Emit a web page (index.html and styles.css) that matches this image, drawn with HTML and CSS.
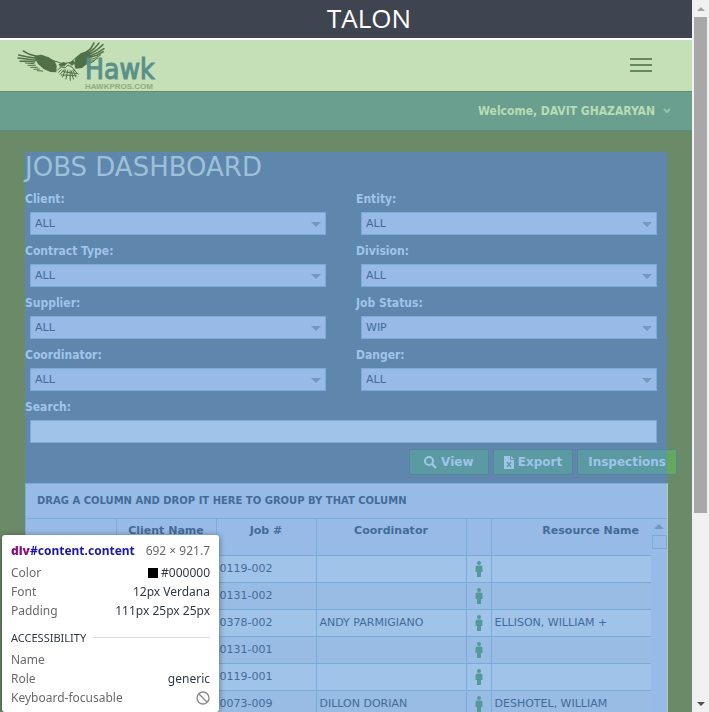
FILE: index.html
```html
<!DOCTYPE html>
<html lang="en">
<head>
<meta charset="utf-8">
<title>Jobs Dashboard</title>
<link rel="stylesheet" href="styles.css">
</head>
<body>
<div class="app">
  <header>
    <div class="brandbar">TALON</div>
    <div class="navbar">
      <a class="logo" href="#">
        <svg class="hawk" viewBox="51 120 267 123" aria-hidden="true">
          <g fill="#4f7049">
            <path d="M104 164l20-3 22 8 18 11 6 14-1 20-18-1-20-9-17-15-10-18z"/>
            <path d="M226 170l16-13 20-8 10 6-6 18-8 18-12 10-20 2-3-14z"/>
            <path d="M176 190l14-7 12 4-8 8-14 2zM206 186l14-8 6 8-10 8z"/>
          </g>
          <g fill="none" stroke="#4f7049" stroke-linecap="round">
            <path stroke-width="4.500" d="M70 150l18 10 22 6M56 162l24 5 28 5M54 171l26 3 26 4M60 181l22 0 22 2M258 154l14-11 10-17M262 158l20-15 15-17M264 162l28-16 17-15M266 166l28-12 18-11M262 172l30-10 18-10"/>
            <path stroke-width="3" d="M76 186l26 2M84 193l22 0M92 199l20 0M102 205l16-1M112 209l16 1M260 178l24-6 18-10M258 184l22-5 14-8M254 190l18-4 12-7"/>
            <path stroke-width="3" d="M160 179l20 6 12 10M226 172l-14 12-12 2M172 208l10-10 14 2 8-8 12 6 8 10M176 214l8-8M180 220l12-14M188 228l8-22M198 234l5-26M211 238l-1-28M220 234l-6-24M228 228l-9-20M235 220l-14-14M190 212l40 6M184 222l44 2"/>
          </g>
        </svg>
        <span class="logo-text"><span class="logo-name">Hawk</span><span class="logo-site">HAWKPROS.COM</span></span>
      </a>
      <button class="menu" type="button" aria-label="Menu"><span></span><span></span><span></span></button>
    </div>
    <div class="userbar">
      <a class="user" href="#">Welcome, DAVIT GHAZARYAN
        <svg width="8" height="6" viewBox="0 0 8 6" aria-hidden="true"><path d="M1 1l3 3 3-3" fill="none" stroke="#93c4a6" stroke-width="2"/></svg>
      </a>
    </div>
  </header>
  <main>
    <h1>JOBS DASHBOARD</h1>
    <form class="filters">
      <div class="field"><label for="client">Client:</label><div class="pick"><select id="client"><option>ALL</option></select></div></div>
      <div class="field"><label for="entity">Entity:</label><div class="pick"><select id="entity"><option>ALL</option></select></div></div>
      <div class="field"><label for="contract">Contract Type:</label><div class="pick"><select id="contract"><option>ALL</option></select></div></div>
      <div class="field"><label for="division">Division:</label><div class="pick"><select id="division"><option>ALL</option></select></div></div>
      <div class="field"><label for="supplier">Supplier:</label><div class="pick"><select id="supplier"><option>ALL</option></select></div></div>
      <div class="field"><label for="status">Job Status:</label><div class="pick"><select id="status"><option>WIP</option></select></div></div>
      <div class="field"><label for="coordinator">Coordinator:</label><div class="pick"><select id="coordinator"><option>ALL</option></select></div></div>
      <div class="field"><label for="danger">Danger:</label><div class="pick"><select id="danger"><option>ALL</option></select></div></div>
      <div class="field wide"><label for="search">Search:</label><input id="search" type="text"></div>
    </form>
    <div class="actions">
      <button type="button"><svg width="13" height="13" viewBox="0 0 13 13" aria-hidden="true"><circle cx="5" cy="5" r="4" fill="none" stroke="currentColor" stroke-width="2"/><path d="M8 8l4 4" stroke="currentColor" stroke-width="2.4"/></svg>View</button>
      <button type="button"><svg width="10" height="13" viewBox="0 0 10 13" aria-hidden="true"><path d="M0 0h6v4h4v9H0zM7 0l3 3H7z" fill="currentColor"/><path d="M3 6l4 5M7 6l-4 5" stroke="#5b9aa2" stroke-width="1.3"/></svg>Export</button>
      <button class="edge" type="button">Inspections</button>
    </div>
    <section class="grid">
      <div class="group">DRAG A COLUMN AND DROP IT HERE TO GROUP BY THAT COLUMN</div>
      <div class="grid-body">
        <table>
          <colgroup><col class="c-open"><col class="c-client"><col class="c-job"><col class="c-coord"><col class="c-icon"><col></colgroup>
          <thead><tr><th></th><th>Client Name</th><th>Job #</th><th>Coordinator</th><th></th><th class="resource">Resource Name</th></tr></thead>
          <tbody>
            <tr><td></td><td></td><td>0119-002</td><td></td><td class="who"><svg><use href="#person"/></svg></td><td></td></tr>
            <tr><td></td><td></td><td>0131-002</td><td></td><td class="who"><svg><use href="#person"/></svg></td><td></td></tr>
            <tr><td></td><td></td><td>0378-002</td><td>ANDY PARMIGIANO</td><td class="who"><svg><use href="#person"/></svg></td><td>ELLISON, WILLIAM +</td></tr>
            <tr><td></td><td></td><td>0131-001</td><td></td><td class="who"><svg><use href="#person"/></svg></td><td></td></tr>
            <tr><td></td><td></td><td>0119-001</td><td></td><td class="who"><svg><use href="#person"/></svg></td><td></td></tr>
            <tr><td></td><td></td><td>0073-009</td><td>DILLON DORIAN</td><td class="who"><svg><use href="#person"/></svg></td><td>DESHOTEL, WILLIAM</td></tr>
          </tbody>
        </table>
        <div class="grid-scroll"><span class="up"></span><span class="thumb"></span></div>
      </div>
    </section>
  </main>
</div>
<div class="scrollbar" aria-hidden="true"><span class="arrow-up"></span><span class="track-thumb"></span><span class="arrow-down"></span></div>
<aside class="inspector">
  <div class="inspector-head"><span class="selector"><b>div</b>#content.content</span><span class="size">692 × 921.7</span></div>
  <dl>
    <div><dt>Color</dt><dd><i class="swatch"></i>#000000</dd></div>
    <div><dt>Font</dt><dd>12px Verdana</dd></div>
    <div><dt>Padding</dt><dd>111px 25px 25px</dd></div>
  </dl>
  <h2>ACCESSIBILITY</h2>
  <dl>
    <div><dt>Name</dt><dd></dd></div>
    <div><dt>Role</dt><dd>generic</dd></div>
    <div><dt>Keyboard-focusable</dt><dd><svg width="14" height="14" viewBox="0 0 14 14" aria-label="No"><g fill="none" stroke="#8c8c8c" stroke-width="1.4"><circle cx="7" cy="7" r="6"/><path d="M3 3l8 8"/></g></svg></dd></div>
  </dl>
</aside>
<svg class="defs" aria-hidden="true"><symbol id="person" viewBox="0 0 8 16"><circle cx="4" cy="2" r="2"/><path d="M2 4.500h4q1.500 0 1.500 1.500v5H6v5H2v-5H.5V6q0-1.500 1.500-1.500z"/></symbol></svg>
</body>
</html>
```
FILE: styles.css
```css
* { box-sizing: border-box; }
body {
  display: flex;
  height: 100vh;
  margin: 0;
  overflow: hidden;
  background: #6b8a67;
  font: 11px/16px "DejaVu Sans", sans-serif;
  color: #446b98;
}
.app { flex: 1; min-width: 0; }
a { text-decoration: none; }
button, select, input { font: inherit; color: inherit; }

.brandbar {
  height: 40px;
  border-bottom: 2px solid #fff;
  background: #3f4550;
  color: #fff;
  font: 26px/36px "Open Sans", sans-serif;
  text-align: center;
  padding-left: 46px;
}
.navbar {
  display: flex;
  align-items: center;
  justify-content: space-between;
  height: 52px;
  padding: 0 40px 0 17px;
  border-bottom: 1px solid #6b8a67;
  background: #c5dfb6;
}
.logo { display: flex; height: 50px; }
.hawk { width: 89px; height: 41px; }
.logo-text { display: flex; flex-direction: column; margin-left: -21px; padding-top: 17px; }
.logo-name { font: 28px/24px "DejaVu Sans Condensed", sans-serif; color: #5a908a; -webkit-text-stroke: 1px #5a908a; }
.logo-site { font: bold 8px/9px "Liberation Sans", sans-serif; color: #8fac80; }
.menu { display: grid; gap: 4px; width: 22px; padding: 0 0 2px; border: 0; background: none; }
.menu span { height: 2px; background: #66885f; }
.userbar {
  display: flex;
  justify-content: flex-end;
  height: 39px;
  padding: 0 21px;
  border-bottom: 1px solid #5a8f86;
  background: #6a9f90;
}
.user { display: flex; align-items: center; gap: 8px; font: bold 12px/38px "DejaVu Sans Condensed", sans-serif; color: #b8dcb5; }

main { margin: 21px 25px 0; background: #5f86ad; }
h1 { margin: 0; font: 26px/30px "DejaVu Sans", sans-serif; color: #9cc1d8; }
.filters { display: grid; grid-template-columns: 1fr 1fr; column-gap: 30px; padding: 7px 10px 0 0; }
.field { padding-bottom: 6px; }
.wide { grid-column: 1 / -1; }
.field label { display: block; font: bold 12px/21px "DejaVu Sans Condensed", sans-serif; padding-bottom: 2px; color: #9fc4ea; }
.pick { position: relative; margin-left: 5px; }
.pick::after {
  content: "";
  position: absolute;
  top: 10px;
  right: 5px;
  border: solid transparent;
  border-width: 5px 5px 0;
  border-top-color: #7299c2;
  pointer-events: none;
}
select, input {
  display: block;
  width: 100%;
  height: 23px;
  padding: 1px 4px 0;
  border: 1px solid #7babd9;
  border-radius: 0;
  background: #97bbe6;
  appearance: none;
}
input { width: calc(100% - 5px); margin-left: 5px; background: #a0c4e9; }
.actions { display: flex; justify-content: flex-end; gap: 4px; margin-right: -10px; }
.actions button {
  display: flex;
  align-items: center;
  justify-content: center;
  gap: 4px;
  min-width: 80px;
  height: 26px;
  padding: 0 10px;
  border: 1px solid #5585a0;
  border-radius: 2px;
  background: #5b9aa2;
  color: #9fc4ea;
  font: bold 12px/24px "DejaVu Sans", sans-serif;
}
.actions .edge { background: linear-gradient(90deg, #5b9aa2 calc(100% - 9px), #65a85b 0); }

.grid { margin: 8px -1px 0 0; border: 1px solid #7babd9; border-right-color: #a5d3a5; background: #97bbe6; }
.group { padding: 0 11px; font: bold 10px/34px "DejaVu Sans", sans-serif; border-bottom: 1px solid #7babd9; }
.grid-body { display: flex; }
table { flex: 1; min-width: 0; table-layout: fixed; border-collapse: collapse; }
.c-open { width: 90px; }
.c-client, .c-job { width: 100px; }
.c-coord { width: 150px; }
.c-icon { width: 25px; }
th, td { border: 0 solid #7babd9; border-width: 0 1px 1px 0; text-align: left; white-space: nowrap; overflow: hidden; }
th:last-child, td:last-child { border-right: 0; }
th { height: 36px; padding: 4px 0 0; font: bold 11px/16px "DejaVu Sans", sans-serif; text-align: center; vertical-align: top; }
th.resource { padding-right: 12px; text-align: right; }
td { height: 27px; padding: 0 3px; background: #a0c4e9; }
tr:nth-child(even) td { background: #98bce4; }
td.who { padding: 0; }
.who svg { display: block; width: 8px; height: 16px; margin: 0 auto; fill: #56999a; }
.grid-scroll { display: flex; flex-direction: column; align-items: center; gap: 6px; width: 16px; padding-top: 5px; }
.up { border: solid transparent; border-width: 0 5px 5px; border-bottom-color: #7299c2; }
.thumb { width: 15px; height: 14px; border: 1px solid #7babd9; }

.scrollbar { display: flex; flex-direction: column; align-items: center; width: 17px; padding: 7px 0 6px; background: #f1f1f1; }
.arrow-up { border: solid transparent; border-width: 0 4px 4px; border-bottom-color: #a3a3a3; }
.track-thumb { width: 13px; height: 71%; margin: 6px 0 auto; background: #a8a8a8; }
.arrow-down { border: solid transparent; border-width: 4px 4px 0; border-top-color: #505050; }

.inspector {
  position: fixed;
  left: 2px;
  bottom: 0;
  width: 217px;
  padding: 5px 9px;
  border-radius: 3px;
  background: #fff;
  box-shadow: 0 1px 6px rgba(0, 0, 0, .45);
  font: 12px/19px "Noto Sans", sans-serif;
  color: #303942;
}
.inspector-head { display: flex; justify-content: space-between; line-height: 22px; padding-bottom: 1px; }
.selector { font-weight: 700; color: #1a1aa6; }
.selector b { color: #881280; }
.size, dt { color: #6a6a6a; }
dl { margin: 0; }
dl div { display: flex; justify-content: space-between; }
dd { display: flex; align-items: center; margin: 0; }
.swatch { width: 10px; height: 10px; margin-right: 3px; background: #000; }
.inspector h2 { display: flex; align-items: center; gap: 7px; margin: 8px 0 3px; font: 11px/19px "Noto Sans", sans-serif; }
.inspector h2::after { content: ""; flex: 1; height: 1px; background: #ddd; }
.defs { position: absolute; width: 0; height: 0; }
```
